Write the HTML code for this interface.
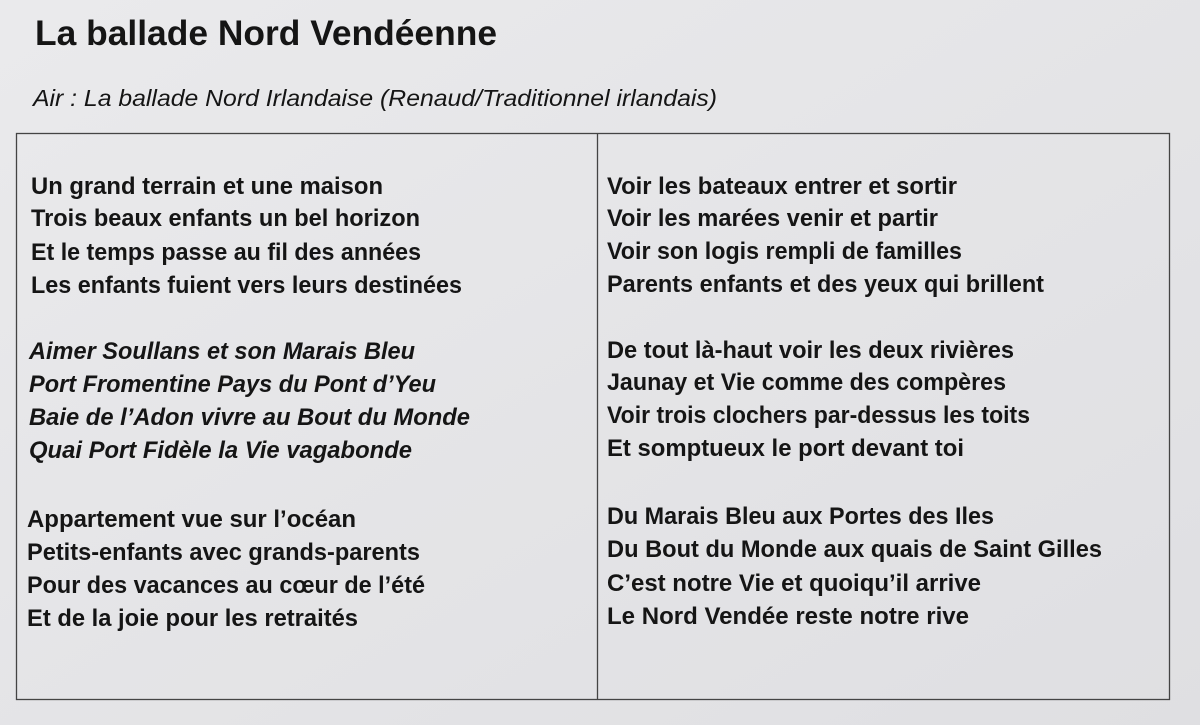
<!DOCTYPE html>
<html><head><meta charset="utf-8"><style>
html,body{margin:0;padding:0;background:#e5e5e8;}
svg{display:block}
text{font-family:"Liberation Sans",sans-serif;fill:#151515;}
</style></head><body>
<svg width="1200" height="725" viewBox="0 0 1200 725">
<defs><linearGradient id="g" x1="0" x2="1" y1="0" y2="1"><stop offset="0" stop-color="#eaeaec"/><stop offset="1" stop-color="#dfdfe2"/></linearGradient></defs>
<rect width="1200" height="725" fill="url(#g)"/>
<rect x="16.5" y="133.5" width="1153" height="566" fill="none" stroke="#444" stroke-width="1.3"/>
<line x1="597.5" y1="134" x2="597.5" y2="700" stroke="#444" stroke-width="1.3"/>
<text x="35" y="45" font-size="35" font-weight="bold" textLength="462" lengthAdjust="spacingAndGlyphs">La ballade Nord Vendéenne</text>
<text x="33" y="106" font-size="23" font-style="italic" fill="#333" textLength="684" lengthAdjust="spacingAndGlyphs">Air : La ballade Nord Irlandaise (Renaud/Traditionnel irlandais)</text>
<g font-size="24.5" font-weight="bold" lengthAdjust="spacingAndGlyphs">
<text x="31" y="194" textLength="352" lengthAdjust="spacingAndGlyphs">Un grand terrain et une maison</text>
<text x="31" y="226" textLength="389" lengthAdjust="spacingAndGlyphs">Trois beaux enfants un bel horizon</text>
<text x="31" y="260" textLength="390" lengthAdjust="spacingAndGlyphs">Et le temps passe au fil des années</text>
<text x="31" y="293" textLength="431" lengthAdjust="spacingAndGlyphs">Les enfants fuient vers leurs destinées</text>
<g font-style="italic">
<text x="29" y="359" textLength="386" lengthAdjust="spacingAndGlyphs">Aimer Soullans et son Marais Bleu</text>
<text x="29" y="392" textLength="407" lengthAdjust="spacingAndGlyphs">Port Fromentine Pays du Pont d’Yeu</text>
<text x="29" y="425" textLength="441" lengthAdjust="spacingAndGlyphs">Baie de l’Adon vivre au Bout du Monde</text>
<text x="29" y="458" textLength="383" lengthAdjust="spacingAndGlyphs">Quai Port Fidèle la Vie vagabonde</text>
</g>
<text x="27" y="527" textLength="329" lengthAdjust="spacingAndGlyphs">Appartement vue sur l’océan</text>
<text x="27" y="560" textLength="393" lengthAdjust="spacingAndGlyphs">Petits-enfants avec grands-parents</text>
<text x="27" y="593" textLength="398" lengthAdjust="spacingAndGlyphs">Pour des vacances au cœur de l’été</text>
<text x="27" y="626" textLength="331" lengthAdjust="spacingAndGlyphs">Et de la joie pour les retraités</text>

<text x="607" y="194" textLength="350" lengthAdjust="spacingAndGlyphs">Voir les bateaux entrer et sortir</text>
<text x="607" y="226" textLength="331" lengthAdjust="spacingAndGlyphs">Voir les marées venir et partir</text>
<text x="607" y="259" textLength="355" lengthAdjust="spacingAndGlyphs">Voir son logis rempli de familles</text>
<text x="607" y="292" textLength="437" lengthAdjust="spacingAndGlyphs">Parents enfants et des yeux qui brillent</text>
<text x="607" y="358" textLength="407" lengthAdjust="spacingAndGlyphs">De tout là-haut voir les deux rivières</text>
<text x="607" y="390" textLength="399" lengthAdjust="spacingAndGlyphs">Jaunay et Vie comme des compères</text>
<text x="607" y="423" textLength="423" lengthAdjust="spacingAndGlyphs">Voir trois clochers par-dessus les toits</text>
<text x="607" y="456" textLength="357" lengthAdjust="spacingAndGlyphs">Et somptueux le port devant toi</text>
<text x="607" y="524" textLength="387" lengthAdjust="spacingAndGlyphs">Du Marais Bleu aux Portes des Iles</text>
<text x="607" y="557" textLength="495" lengthAdjust="spacingAndGlyphs">Du Bout du Monde aux quais de Saint Gilles</text>
<text x="607" y="591" textLength="374" lengthAdjust="spacingAndGlyphs">C’est notre Vie et quoiqu’il arrive</text>
<text x="607" y="624" textLength="362" lengthAdjust="spacingAndGlyphs">Le Nord Vendée reste notre rive</text>
</g>
</svg>
</body></html>
